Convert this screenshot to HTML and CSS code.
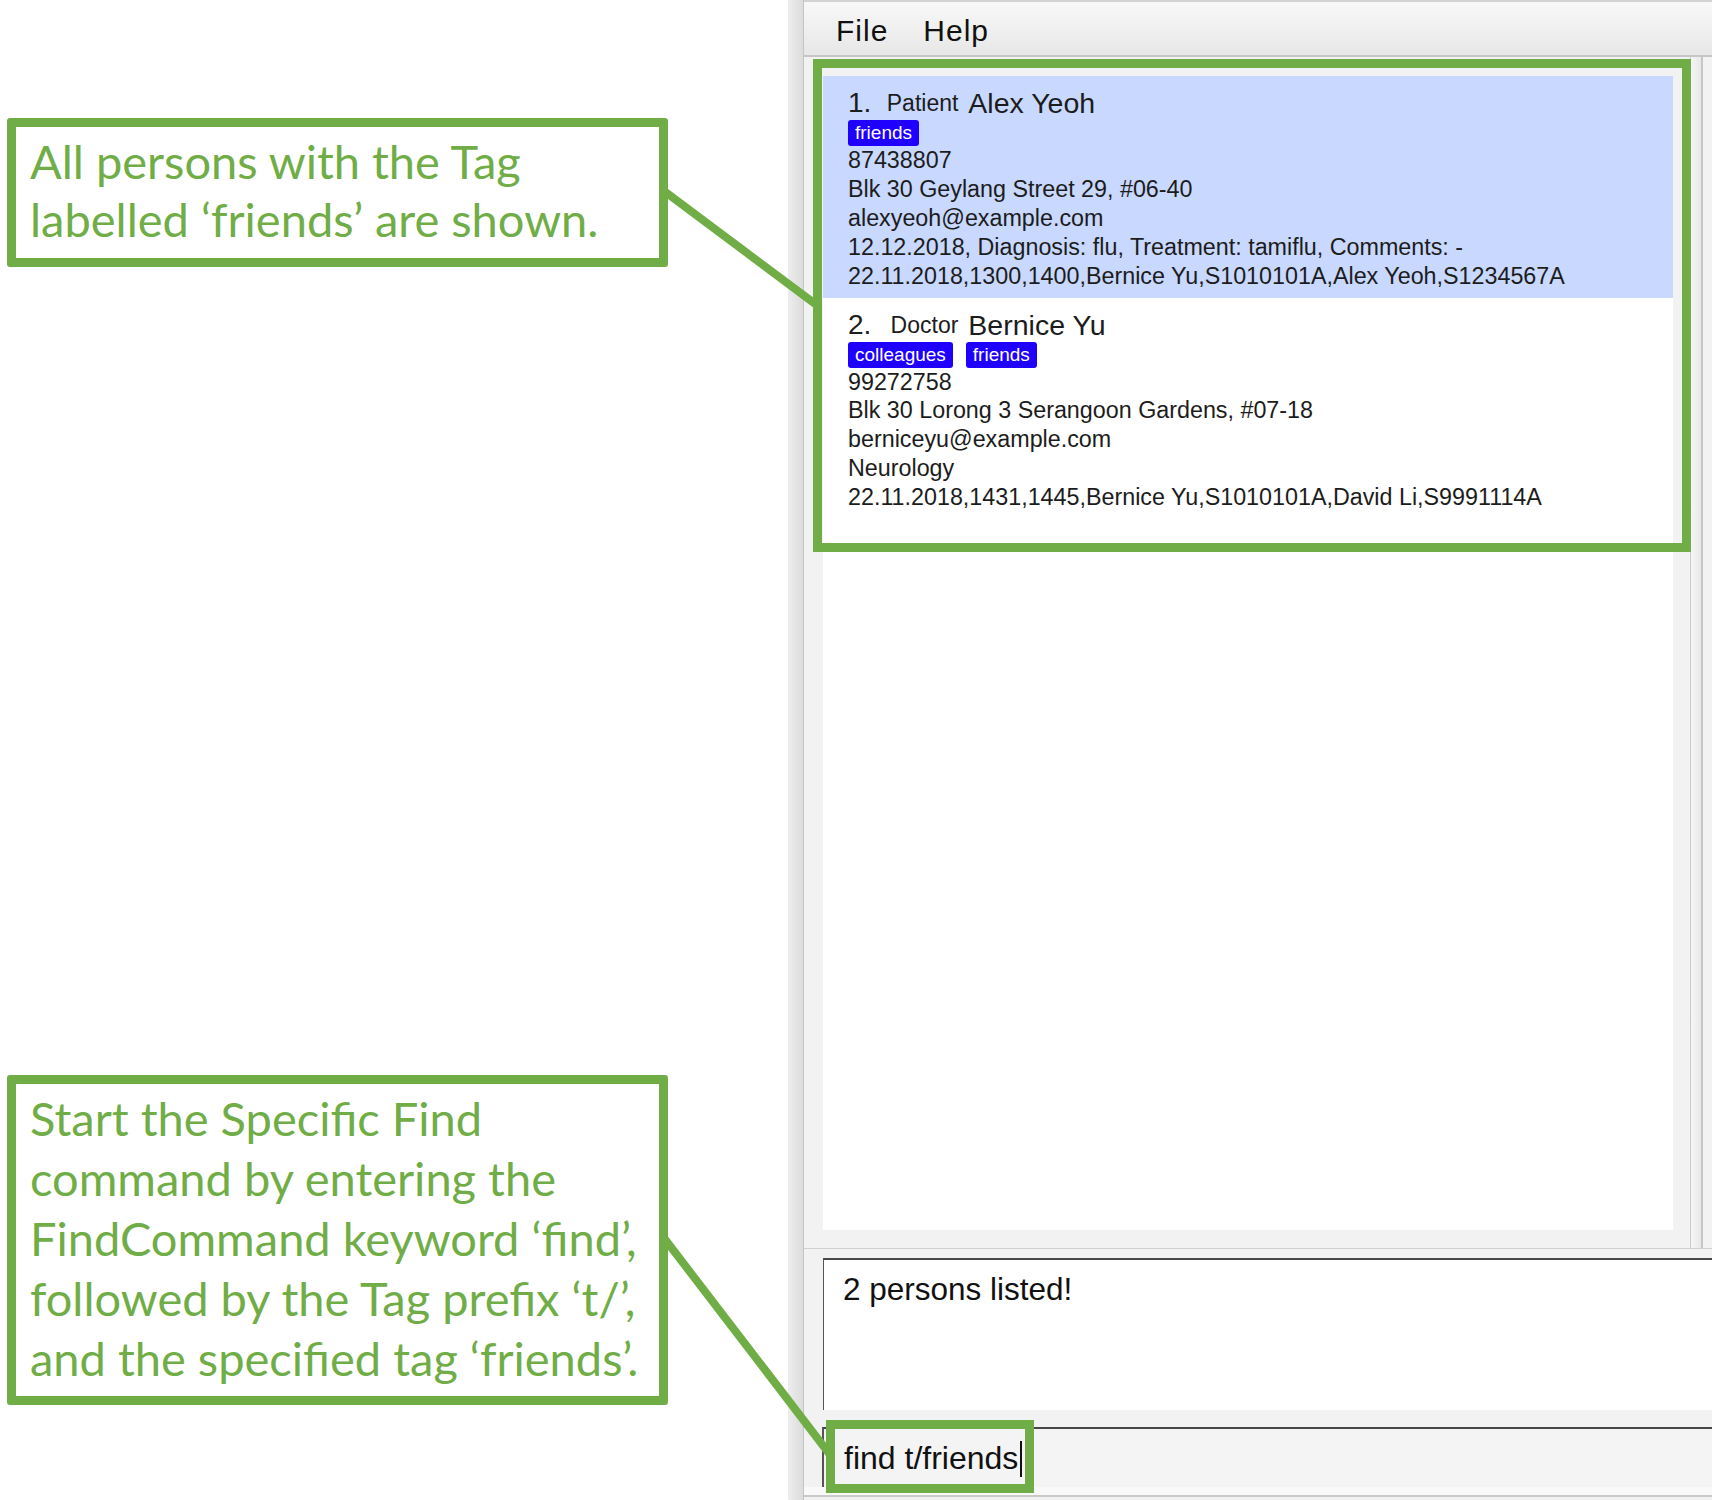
FILE: index.html
```html
<!DOCTYPE html>
<html lang="en">
<head>
<meta charset="utf-8">
<title>Find by tag</title>
<link rel="stylesheet" href="styles.css">
</head>
<body>
<div class="page">
  <aside class="notes">
    <div class="callout callout-top">All persons with the Tag<br>labelled ‘friends’ are shown.</div>
    <div class="callout callout-bottom">Start the Specific Find<br>command by entering the<br>FindCommand keyword ‘find’,<br>followed by the Tag prefix ‘t/’,<br>and the specified tag ‘friends’.</div>
  </aside>
  <div class="shadow"></div>
  <main class="window">
    <nav class="menubar"><span class="menu">File</span><span class="menu">Help</span></nav>
    <div class="split">
      <section class="list-pane">
        <div class="list">
          <article class="card selected">
            <div class="name-row"><span class="idx">1.</span><span class="role">Patient</span><span class="name">Alex Yeoh</span></div>
            <div class="tags"><span class="tag">friends</span></div>
            <div class="line">87438807</div>
            <div class="line">Blk 30 Geylang Street 29, #06-40</div>
            <div class="line">alexyeoh@example.com</div>
            <div class="line">12.12.2018, Diagnosis: flu, Treatment: tamiflu, Comments: -</div>
            <div class="line">22.11.2018,1300,1400,Bernice Yu,S1010101A,Alex Yeoh,S1234567A</div>
          </article>
          <article class="card">
            <div class="name-row"><span class="idx">2.</span><span class="role">Doctor</span><span class="name">Bernice Yu</span></div>
            <div class="tags"><span class="tag">colleagues</span><span class="tag">friends</span></div>
            <div class="line">99272758</div>
            <div class="line">Blk 30 Lorong 3 Serangoon Gardens, #07-18</div>
            <div class="line">berniceyu@example.com</div>
            <div class="line">Neurology</div>
            <div class="line">22.11.2018,1431,1445,Bernice Yu,S1010101A,David Li,S9991114A</div>
          </article>
        </div>
      </section>
      <div class="divider"></div>
      <section class="right-pane"></section>
    </div>
    <div class="result-pane"><div class="result">2 persons listed!</div></div>
    <div class="command-pane"><div class="command">find t/friends<span class="caret"></span></div></div>
    <div class="statusbar"></div>
  </main>
  <svg class="overlay" width="1712" height="1500" viewBox="0 0 1712 1500" aria-hidden="true">
    <g fill="none" stroke="#70ad47">
      <line x1="664" y1="191" x2="818" y2="306" stroke-width="8"/>
      <line x1="664" y1="1238" x2="831" y2="1456" stroke-width="8"/>
      <rect x="817.5" y="63.5" width="869" height="484" stroke-width="9"/>
      <rect x="830.5" y="1424.5" width="199" height="64" stroke-width="9"/>
    </g>
  </svg>
</div>
</body>
</html>
```

FILE: styles.css
```css
html, body {
  margin: 0;
  padding: 0;
  background: #ffffff;
}

.page {
  position: relative;
  display: flex;
  width: 1712px;
  height: 1500px;
  overflow: hidden;
  background: #ffffff;
}

/* ---------- annotations ---------- */
.notes {
  width: 788px;
  flex: none;
  display: flex;
  flex-direction: column;
  padding-left: 7px;
  box-sizing: border-box;
}

.callout {
  width: 661px;
  box-sizing: border-box;
  border: 9px solid #70ad47;
  border-radius: 3px;
  padding-left: 14px;
  font-family: Lato, "Open Sans", sans-serif;
  font-size: 47px;
  color: #70ad47;
  white-space: nowrap;
}

.callout-top {
  margin-top: 118px;
  height: 149px;
  padding-top: 5px;
  line-height: 58px;
}

.callout-bottom {
  margin-top: 808px;
  height: 330px;
  padding-top: 4px;
  line-height: 60px;
}

.shadow {
  width: 16px;
  flex: none;
  box-sizing: border-box;
  background: linear-gradient(to right, #ededed, #dcdcdc);
  border-right: 1px solid #c4c4c4;
}

/* ---------- app window ---------- */
.window {
  flex: 1;
  display: flex;
  flex-direction: column;
  background: #f2f2f2;
  font-family: "Liberation Sans", Arial, Helvetica, sans-serif;
  color: #1c1c1c;
  min-width: 0;
}

.menubar {
  height: 57px;
  box-sizing: border-box;
  display: flex;
  align-items: center;
  gap: 35px;
  padding: 4px 0 0 32px;
  border-top: 2px solid #d3d3d3;
  border-bottom: 2px solid #c6c6c6;
  background: linear-gradient(to bottom, #f8f8f8, #e7e7e7);
}

.menu {
  font-size: 30px;
  letter-spacing: 1px;
  color: #111;
}

.split {
  display: flex;
  height: 1192px;
  box-sizing: border-box;
  border-bottom: 1px solid #d0d0d0;
}

.list-pane {
  width: 886px;
  flex: none;
  box-sizing: border-box;
  padding: 19px 17px 18px 19px;
}

.list {
  height: 100%;
  background: #ffffff;
  overflow: hidden;
}

.divider {
  width: 13px;
  flex: none;
  box-sizing: border-box;
  border-left: 1px solid #cacaca;
  border-right: 2px solid #c6c6c6;
  background: linear-gradient(to right, #f6f6f6, #e8e8e8);
}

.right-pane {
  flex: 1;
  background: #f2f2f2;
}

/* ---------- person cards ---------- */
.card {
  padding: 10px 20px 7px 25px;
}

.card.selected {
  background: #c8d8fe;
}

.name-row {
  display: flex;
  align-items: center;
  height: 34px;
}

.idx {
  font-size: 28px;
  line-height: 34px;
}

.role {
  width: 87px;
  text-align: right;
  font-size: 23px;
  line-height: 26px;
  margin-right: 10px;
}

.name {
  font-size: 28.5px;
  line-height: 34px;
}

.tags {
  display: flex;
  gap: 13px;
  height: 26px;
}

.tag {
  background: #1f00ff;
  color: #ffffff;
  font-size: 19px;
  line-height: 26px;
  padding: 0 7px;
  border-radius: 3px;
}

.line {
  font-size: 23.3px;
  line-height: 28.9px;
  white-space: nowrap;
}

/* ---------- result & command ---------- */
.result-pane {
  height: 178px;
  box-sizing: border-box;
  padding: 9px 0 17px 19px;
}

.result {
  height: 100%;
  box-sizing: border-box;
  background: #ffffff;
  border-top: 2px solid #4a4a4a;
  border-left: 1px solid #555555;
  padding: 10px 0 0 19px;
  font-size: 31.5px;
  line-height: 38px;
  color: #111;
}

.command-pane {
  height: 60px;
  padding-left: 18px;
}

.command {
  height: 100%;
  box-sizing: border-box;
  background: #f4f4f4;
  border-top: 2px solid #474747;
  border-left: 2px solid #555555;
  padding: 10px 0 0 20px;
  font-size: 32px;
  line-height: 38px;
  color: #111;
  display: flex;
  align-items: flex-start;
}

.caret {
  display: inline-block;
  width: 2px;
  height: 36px;
  margin-top: 2px;
  margin-left: 2px;
  background: #111;
}

.statusbar {
  flex: 1;
  box-sizing: border-box;
  border-top: 8px solid #f9f9f9;
  background: linear-gradient(to bottom, #c9c9c9 0, #c9c9c9 2px, #f2f2f2 2px);
}

.overlay {
  position: absolute;
  left: 0;
  top: 0;
  pointer-events: none;
}
```
